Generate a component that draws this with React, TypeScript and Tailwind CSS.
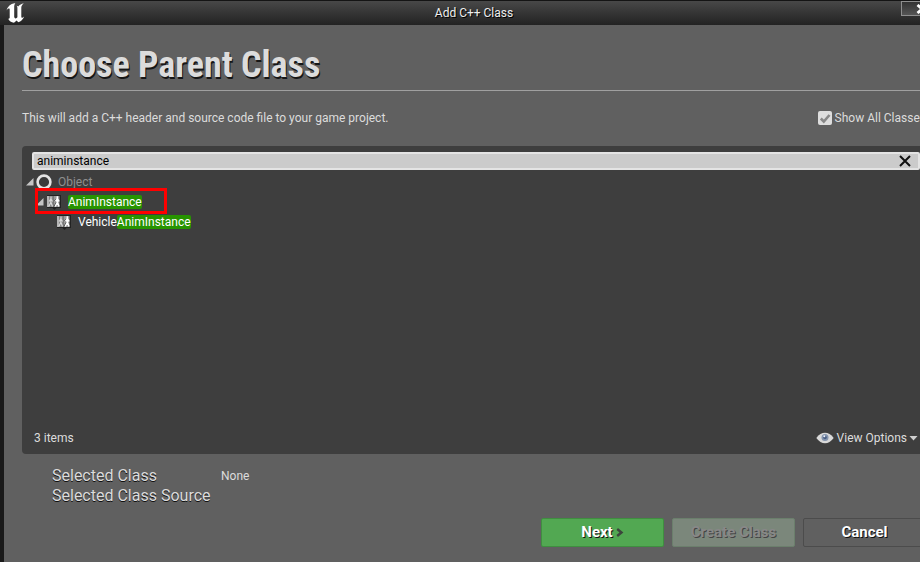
import { useState } from 'react';
import type { ReactNode } from 'react';

function EngineLogo() {
  return (
    <svg viewBox="0 0 20 22" className="h-[22px] w-5 shrink-0" fill="#fff" aria-hidden="true">
      <path d="M8.400 1.200C4.600 1.800 1.600 4.200.4 8.400c1-1.400 1.800-1.900 2.500-1.900.6 0 .8.500.8 1.300v7.800c0 .9-.4 1.300-1.500 1.100 1 2 3 3.700 5.800 4l2.600-2.300 1.700 1.900c2.600-1 4.700-3 5.900-5.900-1 .9-1.700 1.300-2.200 1.300-.5 0-.7-.4-.7-1.200V5.800c0-1.600.9-3 2.500-4.500-2.200.5-4.200 1.500-5.600 3.100-.4-.4-1-.6-1.700-.6.7.5.9 1.200.9 2.100v9.400c-.5.700-1.100 1.100-1.700 1.100-1 0-1.500-.7-1.500-1.800V5c0-1.700.2-2.700 1.200-3.800z" />
    </svg>
  );
}

function Expander() {
  return (
    <button type="button" aria-label="Collapse" className="flex h-5 w-2 shrink-0 items-center">
      <svg viewBox="0 0 8 8" className="size-2" aria-hidden="true">
        <path d="M7.500 0V7.500H0z" fill="#c4c4c4" />
      </svg>
    </button>
  );
}

function ObjectIcon() {
  return (
    <svg viewBox="0 0 16 16" className="size-4 shrink-0" aria-hidden="true">
      <circle cx="8" cy="8" r="6.400" fill="#3a3a3a" stroke="#e4e4e4" strokeWidth="2.600" />
    </svg>
  );
}

function AnimIcon() {
  return (
    <svg viewBox="0 0 16 16" className="size-4 shrink-0" aria-hidden="true">
      <path d="M1 1h14v13H10.500L8.500 16 6.500 14H1z" fill="#222" />
      <path d="M1 2h6.500v11H1z" fill="#858585" />
      <path d="M7.500 2h6v11h-6z" fill="#9c9c9c" />
      <path d="M1 2h2v11H1z" fill="#b5b5b5" />
      <g fill="none" stroke="#dadada" strokeWidth="1.200">
        <path d="M5 2.500v2M4.800 4.500v4L2.800 12.500M5 8.500l1.500 4M4.800 5L3.200 7.500M5 5l1.500 2.500" />
      </g>
      <path d="M8 12.500l2.300-4V5L8.500 7" fill="none" stroke="#3c3c3c" strokeWidth="1" />
      <g fill="none" stroke="#fff" strokeWidth="1.500">
        <path d="M11.300 2.300v2.200M11.200 4.500v4l-2 4M11.400 8.500l1.700 4M11.200 5L9.600 7.300M11.400 5l1.800 2.500" />
      </g>
    </svg>
  );
}

function EyeIcon() {
  return (
    <svg viewBox="0 0 18 12" className="h-3 w-[18px] shrink-0" aria-hidden="true">
      <path d="M.3 6C3 2.300 5.800.8 9 .8S15 2.300 17.700 6C15 9.700 12.200 11.200 9 11.200S3 9.700.3 6z" fill="#d9d9d9" />
      <circle cx="9" cy="5.500" r="3.500" fill="#8494ad" />
      <circle cx="9" cy="5.500" r="1.800" fill="#4a5f85" />
      <circle cx="8.300" cy="4.300" r="1" fill="#edf2fa" />
    </svg>
  );
}

function Match({ children }: { children: ReactNode }) {
  return <mark className="rounded-xs bg-[#279400] text-white">{children}</mark>;
}

const footerButton =
  'flex h-[29px] w-[123px] items-center justify-center rounded-xs border text-[15px] font-bold';

export default function App() {
  const [query, setQuery] = useState('animinstance');
  const [showAll, setShowAll] = useState(true);

  return (
    <div className="h-screen overflow-hidden bg-[#191919] font-['Roboto','Noto_Sans',sans-serif] text-xs text-[#dcdcdc]">
      <div className="flex h-full w-[calc(100%+28px)] flex-col">
        <header className="flex h-[25px] shrink-0 items-center border-t border-[#141414] bg-linear-to-b from-[#484848] to-[#232323] pl-1.5">
          <div className="flex flex-1">
            <EngineLogo />
          </div>
          <h2 className="text-[#eee] [text-shadow:1px_1px_0_#000]">Add C++ Class</h2>
          <div className="flex flex-1 justify-end self-start pr-1.5">
            <button
              type="button"
              aria-label="Close"
              className="flex h-[15px] w-[41px] items-center justify-center border border-[#8e8e8e] bg-linear-to-b from-[#333] to-[#555]"
            >
              <svg viewBox="0 0 12 10" className="h-2.5 w-3" aria-hidden="true">
                <path d="M1.500 1l9 8M10.500 1l-9 8" stroke="#fff" strokeWidth="2.800" />
              </svg>
            </button>
          </div>
        </header>

        <main className="ml-1 flex flex-1 flex-col bg-[#606060] pr-[22px] pb-[15px] pl-[18px]">
          <h1 className="mt-[17px] h-[49px] border-b border-[#a0a0a0] font-['Roboto_Condensed','Roboto',sans-serif] text-[36px] leading-[46px] font-bold [text-shadow:1px_2px_0_#161616]">
            Choose Parent Class
          </h1>

          <div className="mt-[17px] flex h-5 items-center justify-between">
            <p>This will add a C++ header and source code file to your game project.</p>
            <label className="flex items-center gap-[3px] whitespace-nowrap">
              <span className="grid size-3.5 place-items-center">
                <input
                  type="checkbox"
                  checked={showAll}
                  onChange={(e) => setShowAll(e.target.checked)}
                  className="peer col-start-1 row-start-1 size-3.5 appearance-none rounded-xs bg-[#dedede]"
                />
                <svg
                  viewBox="0 0 14 14"
                  className="pointer-events-none col-start-1 row-start-1 hidden size-3.5 peer-checked:block"
                  aria-hidden="true"
                >
                  <path d="M2.800 7.500l3 3L11.500 4" fill="none" stroke="#888" strokeWidth="2.600" />
                </svg>
              </span>
              Show All Classes
            </label>
          </div>

          <section className="mt-[18px] flex flex-1 flex-col rounded-sm bg-[#3e3e3e]">
            <div className="mt-1.5 mr-1.5 ml-2.5 flex h-[18px] items-center rounded-xs border-2 border-[#e4e4e4] bg-[#cbcbcb] pr-[7px] pl-[3px]">
              <input
                type="text"
                aria-label="Search classes"
                value={query}
                onChange={(e) => setQuery(e.target.value)}
                className="h-3.5 min-w-0 flex-1 bg-transparent leading-[14px] text-black outline-none"
              />
              <button type="button" aria-label="Clear search" onClick={() => setQuery('')}>
                <svg viewBox="0 0 12 12" className="size-3" aria-hidden="true">
                  <path d="M1 1l10 10M11 1L1 11" stroke="#111" strokeWidth="2" />
                </svg>
              </button>
            </div>

            <ul className="relative flex-1 leading-[14px]">
              <li className="mt-0.5 flex h-5 items-center gap-0.5 pl-1">
                <Expander />
                <ObjectIcon />
                <span className="ml-1 text-[#8f8f8f]">Object</span>
              </li>
              <li className="flex h-5 items-center gap-0.5 pl-3.5">
                <Expander />
                <AnimIcon />
                <span className="ml-1">
                  <Match>AnimInstance</Match>
                </span>
              </li>
              <li className="flex h-5 items-center gap-0.5 pl-[34px]">
                <AnimIcon />
                <span className="ml-1 text-white">
                  Vehicle<Match>AnimInstance</Match>
                </span>
              </li>
              <li
                aria-hidden="true"
                className="pointer-events-none absolute top-[18px] left-[13px] h-[26px] w-[132px] border-[3px] border-[#f00]"
              />
            </ul>

            <div className="mb-1.5 flex h-5 items-center justify-between pr-2 pl-3">
              <span>3 items</span>
              <button type="button" className="flex items-center">
                <EyeIcon />
                <span className="ml-[3px]">View Options</span>
                <svg viewBox="0 0 9 5" className="ml-0.5 h-[5px] w-[9px]" aria-hidden="true">
                  <path d="M.5 0h8L4.500 4.500z" fill="#cfcfcf" />
                </svg>
              </button>
            </div>
          </section>

          <dl className="mt-3 ml-[30px] grid grid-cols-[169px_1fr] auto-rows-[20px] items-center">
            <dt className="text-base leading-5 [text-shadow:0_1px_0_#111]">Selected Class</dt>
            <dd>None</dd>
            <dt className="text-base leading-5 [text-shadow:0_1px_0_#111]">Selected Class Source</dt>
            <dd />
          </dl>

          <footer className="mt-3 flex justify-end gap-2">
            <button
              type="button"
              className={`${footerButton} gap-[3px] border-[#3f8f40] bg-[#52a852] text-white [text-shadow:1px_1px_0_#111]`}
            >
              Next
              <svg viewBox="0 0 8 9" className="h-[9px] w-2" aria-hidden="true">
                <path d="M1.200 1l4.300 3.500L1.200 8" fill="none" stroke="#3c463c" strokeWidth="2.400" />
              </svg>
            </button>
            <button
              type="button"
              disabled
              className={`${footerButton} border-[#6b7f6c] bg-[#7b877b] text-[#888] [text-shadow:1px_1px_0_#444]`}
            >
              Create Class
            </button>
            <button
              type="button"
              className={`${footerButton} border-[#4c4c4c] bg-[#606060] text-white [text-shadow:1px_1px_0_#111]`}
            >
              Cancel
            </button>
          </footer>
        </main>
      </div>
    </div>
  );
}
